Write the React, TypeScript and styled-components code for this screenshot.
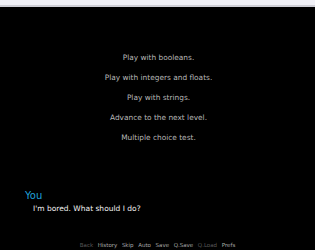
import React from 'react';
import styled, { createGlobalStyle } from 'styled-components';

const GlobalStyle = createGlobalStyle`
  html, body {
    margin: 0;
    padding: 0;
    background: #000;
  }
  body {
    font-family: "DejaVu Sans", sans-serif;
  }
`;

const Screen = styled.div`
  width: 315px;
  height: 250px;
  display: flex;
  flex-direction: column;
  background: #000;
  overflow: hidden;
`;

const TopBar = styled.div`
  height: 5px;
  background: #f0f0f6;
  border-bottom: 2px solid #cfcfd6;
  flex: none;
`;

const ChoiceList = styled.div`
  display: flex;
  flex-direction: column;
  align-items: center;
  gap: 10px;
  padding-top: 45.5px;
  padding-left: 2px;
`;

const Choice = styled.div`
  font-size: 7.4px;
  line-height: 10.2px;
  color: #b8b8b8;
  white-space: nowrap;
`;

const Dialogue = styled.div`
  margin-top: auto;
  padding-left: 25px;
  display: flex;
  flex-direction: column;
`;

const Speaker = styled.div`
  font-size: 10px;
  line-height: 12px;
  color: #1fa1d9;
`;

const Line = styled.div`
  padding-left: 8px;
  margin-top: 2px;
  font-size: 7.5px;
  line-height: 10px;
  color: #f2f2f2;
`;

const QuickMenu = styled.div`
  margin-top: 28px;
  margin-bottom: 1px;
  display: flex;
  justify-content: center;
  gap: 4.6px;
  padding-left: 0px;
`;

const QuickButton = styled.span<{ $off?: boolean }>`
  font-size: 5.5px;
  line-height: 7px;
  color: ${(p) => (p.$off ? '#5a5a5a' : '#a8a8a8')};
`;

const choices = [
  'Play with booleans.',
  'Play with integers and floats.',
  'Play with strings.',
  'Advance to the next level.',
  'Multiple choice test.',
];

const quick = [
  { label: 'Back', off: true },
  { label: 'History' },
  { label: 'Skip' },
  { label: 'Auto' },
  { label: 'Save' },
  { label: 'Q.Save' },
  { label: 'Q.Load', off: true },
  { label: 'Prefs' },
];

export default function App() {
  return (
    <>
      <GlobalStyle />
      <Screen>
        <TopBar />
        <ChoiceList>
          {choices.map((c) => (
            <Choice key={c}>{c}</Choice>
          ))}
        </ChoiceList>
        <Dialogue>
          <Speaker>You</Speaker>
          <Line>I'm bored. What should I do?</Line>
        </Dialogue>
        <QuickMenu>
          {quick.map((q) => (
            <QuickButton key={q.label} $off={q.off}>
              {q.label}
            </QuickButton>
          ))}
        </QuickMenu>
      </Screen>
    </>
  );
}
